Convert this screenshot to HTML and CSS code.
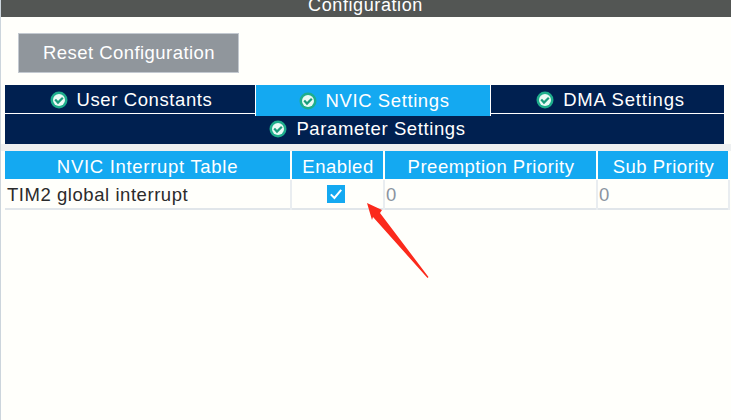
FILE: index.html
```html
<!DOCTYPE html>
<html lang="en">
<head>
    <meta charset="UTF-8">
    <meta name="viewport" content="width=device-width, initial-scale=1.0">
    <title>Configuration</title>
    <link rel="stylesheet" href="styles.css">
</head>
<body>
    <div class="panel">
        <div class="title-bar">Configuration</div>
        <div class="toolbar">
            <button class="reset-btn">Reset Configuration</button>
        </div>
        <div class="tabs">
            <div class="tab-row">
                <div class="tab tab-user">
                    <svg class="ok-icon" viewBox="0 0 18 18"><circle cx="9" cy="9" r="8.5" fill="#1fae8c"/><circle cx="9" cy="9" r="6" fill="#eafaf5"/><path d="M5.2 8.6 8 11.6 12.8 6.8" fill="none" stroke="#1a9c7c" stroke-width="2.2"/></svg>
                    User Constants
                </div>
                <div class="tab tab-nvic active">
                    <svg class="ok-icon" viewBox="0 0 18 18"><circle cx="9" cy="9" r="8.5" fill="#1fae8c"/><circle cx="9" cy="9" r="6" fill="#eafaf5"/><path d="M5.2 8.6 8 11.6 12.8 6.8" fill="none" stroke="#1a9c7c" stroke-width="2.2"/></svg>
                    NVIC Settings
                </div>
                <div class="tab tab-dma">
                    <svg class="ok-icon" viewBox="0 0 18 18"><circle cx="9" cy="9" r="8.5" fill="#1fae8c"/><circle cx="9" cy="9" r="6" fill="#eafaf5"/><path d="M5.2 8.6 8 11.6 12.8 6.8" fill="none" stroke="#1a9c7c" stroke-width="2.2"/></svg>
                    DMA Settings
                </div>
            </div>
            <div class="tab tab-param">
                <svg class="ok-icon" viewBox="0 0 18 18"><circle cx="9" cy="9" r="8.5" fill="#1fae8c"/><circle cx="9" cy="9" r="6" fill="#eafaf5"/><path d="M5.2 8.6 8 11.6 12.8 6.8" fill="none" stroke="#1a9c7c" stroke-width="2.2"/></svg>
                Parameter Settings
            </div>
        </div>
        <div class="band"></div>
        <div class="table">
            <div class="th th-name">NVIC Interrupt Table</div>
            <div class="th">Enabled</div>
            <div class="th">Preemption Priority</div>
            <div class="th">Sub Priority</div>
            <div class="td name">TIM2 global interrupt</div>
            <div class="td center">
                <svg class="check" viewBox="0 0 18 18"><rect width="18" height="18" fill="#14a9f1"/><path d="M3.8 9.4 7.4 13 14.200 4.800" fill="none" stroke="#fff" stroke-width="2"/></svg>
            </div>
            <div class="td num">0</div>
            <div class="td num">0</div>
        </div>
    </div>
    <svg class="arrow" viewBox="0 0 731 420"><path d="M367 203 382 210 380 213 428.500 277 427.500 278 373 217 372 220Z" fill="#fb2a1c"/></svg>
</body>
</html>
```

FILE: styles.css
```css
body {
    margin: 0;
    background: #fffffb;
    font-family: "Liberation Sans", Arial, sans-serif;
    overflow: hidden;
}
.panel {
    height: 420px;
    box-sizing: border-box;
    border-left: 1px solid #ccd5dc;
}
.title-bar {
    height: 17px;
    line-height: 10px;
    background: #535654;
    color: #fff;
    text-align: center;
    font-size: 18px;
    letter-spacing: 0.6px;
    padding-right: 1px;
}
.toolbar {
    padding: 16px 0 12px 17px;
}
.reset-btn {
    display: block;
    width: 221px;
    height: 40px;
    padding: 0 0 0 1px;
    border: 1px solid #c3c9d0;
    background: #90969c;
    color: #fff;
    font-family: inherit;
    font-size: 18.5px;
    letter-spacing: 0.45px;
}
.tabs {
    margin-left: 4px;
    width: 719px;
    background: #002050;
}
.tab-row {
    display: flex;
    height: 29px;
}
.tab {
    display: flex;
    align-items: center;
    justify-content: center;
    gap: 9px;
    padding-top: 1px;
    background: #002050;
    color: #fff;
    font-size: 18.5px;
    letter-spacing: 0.6px;
    box-sizing: border-box;
    border-bottom: 1px solid #fff;
}
.tab-user { width: 250px; padding-left: 2px; }
.tab-nvic { width: 236px; padding-left: 2px; }
.tab-dma { flex: 1; padding-left: 6px; letter-spacing: 0.8px; }
.tab.active {
    height: 31px;
    padding-top: 0;
    background: #14a9f1;
    border-bottom: 0;
    border-left: 1px solid #fff;
    border-right: 1px solid #fff;
    position: relative;
}
.tab-param {
    height: 30px;
    padding-top: 0;
    padding-left: 6px;
    border-bottom: 0;
}
.ok-icon {
    width: 18px;
    height: 18px;
    flex: none;
}
.band {
    height: 7px;
    background: #eef0f1;
}
.table {
    margin-left: 4px;
    width: 723px;
    display: grid;
    grid-template-columns: 285px 91px 211px 130px;
    column-gap: 2px;
    grid-template-rows: 28px 31px;
}
.th {
    background: #14a9f1;
    color: #fff;
    text-align: center;
    line-height: 31px;
    font-size: 18.5px;
    letter-spacing: 0.5px;
    padding-left: 1px;
}
.th-name {
    letter-spacing: 0.7px;
    padding-left: 0;
}
.td {
    margin-top: 1px;
    border-bottom: 2px solid #e1e6ea;
    box-shadow: 2px 0 0 #e9edf0;
    line-height: 30px;
    font-size: 18.5px;
    letter-spacing: 0.55px;
    color: #2b2b2b;
    padding-left: 2px;
}
.center {
    display: flex;
    align-items: center;
    justify-content: center;
    padding: 0 3px 0 0;
}
.num {
    color: #8b94a0;
    padding-left: 1px;
}
.check {
    display: block;
    width: 18px;
    height: 18px;
}
.arrow {
    position: absolute;
    left: 0;
    top: 0;
    width: 731px;
    height: 420px;
}
```
